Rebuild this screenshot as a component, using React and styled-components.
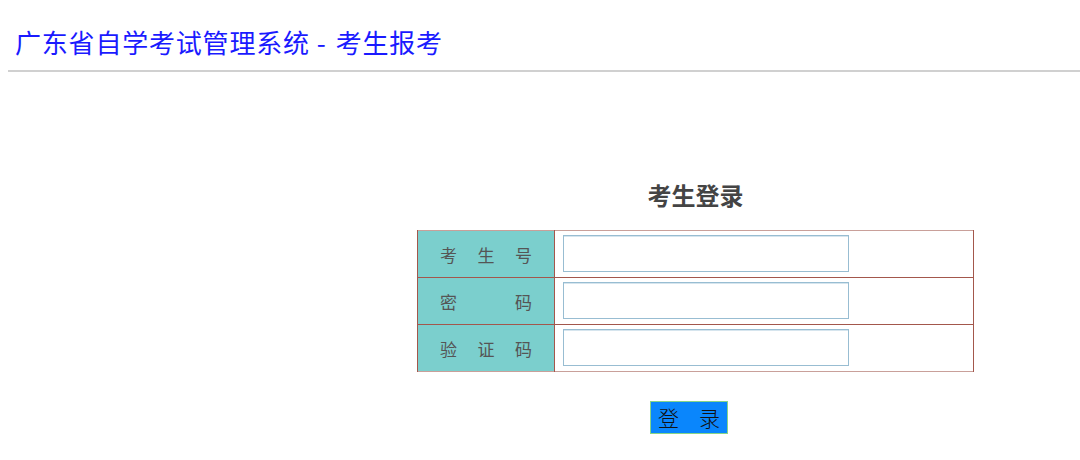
import React from "react";
import styled, { createGlobalStyle } from "styled-components";

const GlobalStyle = createGlobalStyle`
  html, body {
    margin: 0;
    padding: 0;
    background: #fff;
    font-family: "Noto Sans CJK SC", "Noto Sans", sans-serif;
  }
`;

const Page = styled.div`
  padding-left: 8px;
  height: 460px;
  overflow: hidden;
`;

const Title = styled.h1`
  margin: 23px 0 0 7px;
  font-size: 26px;
  line-height: 38px;
  font-weight: 400;
  color: #1a1aff;
  letter-spacing: 0.8px;
`;

const Dash = styled.span`
  margin: 0 9px 0 7px;
`;

const Rule = styled.hr`
  margin: 9px 0 0 0;
  height: 2px;
  border: none;
  background: #d0d0d0;
`;

const Form = styled.form`
  width: 557px;
  margin: 107px 0 0 409px;
  display: flex;
  flex-direction: column;
  align-items: center;
`;

const Heading = styled.h2`
  margin: 0 0 19px 0;
  font-size: 24px;
  line-height: 32px;
  font-weight: 700;
  color: #444;
`;

const Table = styled.table`
  width: 100%;
  border-collapse: collapse;
  border-top: 1px solid #c9a09a;
  border-bottom: 1px solid #c9a09a;
`;

const Row = styled.tr`
  height: 47px;
  & + & td {
    border-top: 1px solid #a3574c;
  }
`;

const Label = styled.td`
  width: 137px;
  box-sizing: border-box;
  padding: 0 22px 0 22px;
  background: #7bcfcd;
  color: #555;
  font-size: 17px;
  text-align: justify;
  text-align-last: justify;
  border-left: 1px solid #a3574c;
  border-right: 1px solid #a3574c;
`;

const Field = styled.td`
  padding: 0 0 2px 8px;
  border-right: 1px solid #a3574c;
`;

const Input = styled.input`
  display: block;
  width: 286px;
  height: 37px;
  box-sizing: border-box;
  border: 1px solid #98bdd2;
  box-shadow: inset 0 1px 0 #d6e5ee;
  outline: none;
  font-size: 15px;
  padding: 0 6px;
`;

const ButtonRow = styled.div`
  margin-top: 29px;
  padding-right: 13px;
`;

const Submit = styled.button`
  width: 78px;
  height: 33px;
  box-sizing: border-box;
  display: flex;
  align-items: center;
  justify-content: space-between;
  padding: 0 7px 1px 7px;
  background: #0a86fc;
  border: 1px solid #86d486;
  color: #111;
  font-family: "Noto Sans CJK SC", sans-serif;
  font-weight: 300;
  font-size: 21px;
  line-height: 1;
  cursor: pointer;
`;

const fields = [
  { label: "考生号", type: "text" },
  { label: "密码", type: "password" },
  { label: "验证码", type: "text" },
];

export default function App() {
  return (
    <Page>
      <GlobalStyle />
      <Title>
        广东省自学考试管理系统<Dash>-</Dash>考生报考
      </Title>
      <Rule />
      <Form onSubmit={e => e.preventDefault()}>
        <Heading>考生登录</Heading>
        <Table>
          <tbody>
            {fields.map(f => (
              <Row key={f.label}>
                <Label>{f.label.split("").join(" ")}</Label>
                <Field>
                  <Input type={f.type} />
                </Field>
              </Row>
            ))}
          </tbody>
        </Table>
        <ButtonRow>
          <Submit type="submit">
            <span>登</span>
            <span>录</span>
          </Submit>
        </ButtonRow>
      </Form>
    </Page>
  );
}
